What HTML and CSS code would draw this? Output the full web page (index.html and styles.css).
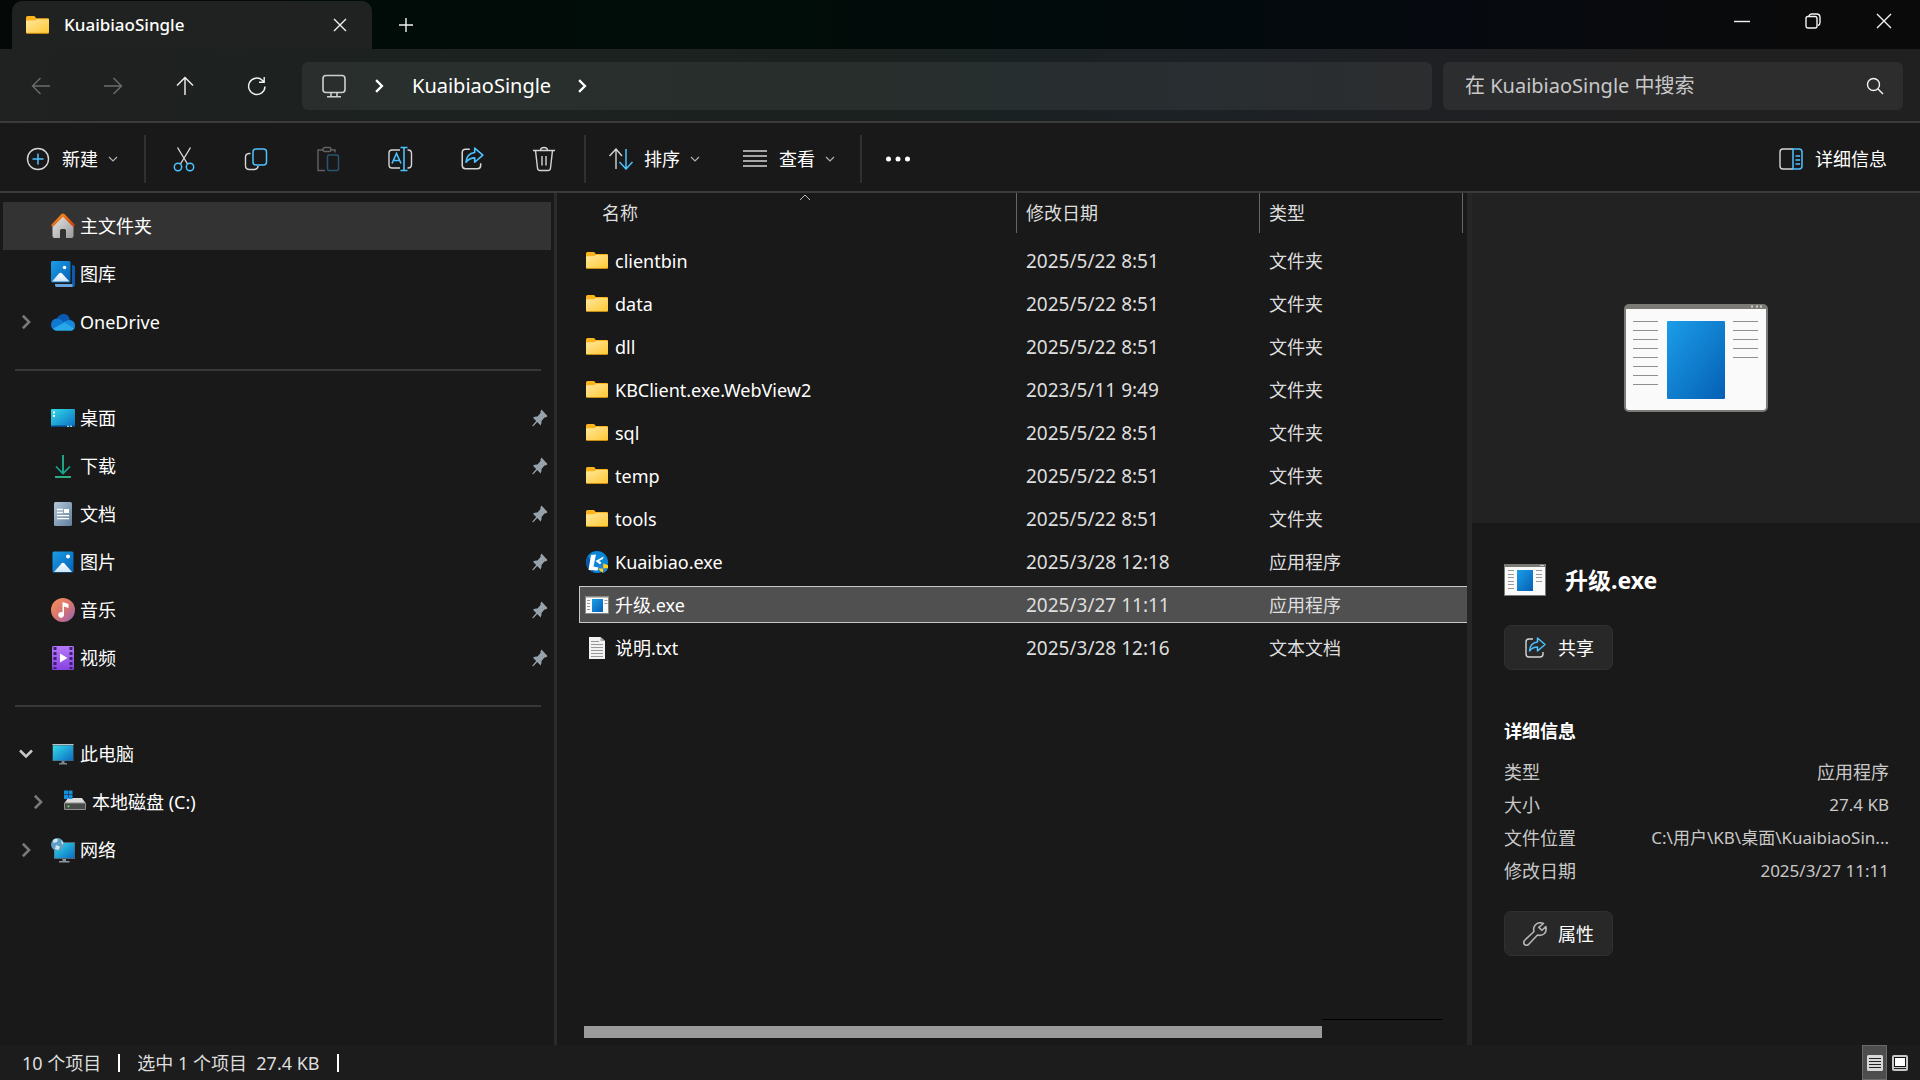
FILE: index.html
```html
<!DOCTYPE html>
<html lang="zh-CN">
<head>
<meta charset="utf-8">
<title>KuaibiaoSingle</title>
<link rel="stylesheet" href="styles.css">
</head>
<body>
<svg class="defs" aria-hidden="true">
  <defs>
    <linearGradient id="gFolder" x1="0" y1="0" x2="1" y2="1"><stop offset="0" stop-color="#ffe7a0"/><stop offset="1" stop-color="#fec831"/></linearGradient>
    <linearGradient id="gBlue" x1="0" y1="0" x2="1" y2="1"><stop offset="0" stop-color="#1b9de8"/><stop offset="1" stop-color="#0560b4"/></linearGradient>
    <linearGradient id="gCyan" x1="0" y1="0" x2="1" y2="1"><stop offset="0" stop-color="#34dbe8"/><stop offset="1" stop-color="#0a6cc4"/></linearGradient>
    <linearGradient id="gWhite" x1="0" y1="0" x2="0" y2="1"><stop offset="0" stop-color="#ffffff"/><stop offset="1" stop-color="#cfe4fa"/></linearGradient>
    <linearGradient id="gHouse" x1="0" y1="0" x2="1" y2="1"><stop offset="0" stop-color="#e8e8e8"/><stop offset="1" stop-color="#9a9a9a"/></linearGradient>
    <linearGradient id="gRoof" x1="0" y1="0" x2="1" y2="1"><stop offset="0" stop-color="#f99d1c"/><stop offset="1" stop-color="#d0380a"/></linearGradient>
    <linearGradient id="gDown" x1="0" y1="0" x2="0" y2="1"><stop offset="0" stop-color="#27b07a"/><stop offset="1" stop-color="#12a595"/></linearGradient>
    <linearGradient id="gDoc" x1="0" y1="0" x2="1" y2="1"><stop offset="0" stop-color="#b4c6d8"/><stop offset="1" stop-color="#5f7f9c"/></linearGradient>
    <linearGradient id="gMusic" x1="0" y1="0" x2="1" y2="1"><stop offset="0" stop-color="#f79257"/><stop offset=".5" stop-color="#d9756f"/><stop offset="1" stop-color="#9560b8"/></linearGradient>
    <linearGradient id="gVideo" x1="0" y1="0" x2="0" y2="1"><stop offset="0" stop-color="#b678fa"/><stop offset="1" stop-color="#8842e0"/></linearGradient>
    <symbol id="folder" viewBox="0 0 22 17"><path d="M0 1.500Q0 0 1.500 0H7.500Q8.500 0 9 1L9.700 2H21Q22 2 22 3V12H0Z" fill="#fbb41b"/><path d="M0 5Q0 4.200 1 4.200H7.500Q8.500 4.200 9.200 3.600L10 3H21Q22 3 22 4V15.500Q22 16.500 21 16.500H1Q0 16.500 0 15.500Z" fill="url(#gFolder)"/><path d="M0.500 16.500H21.500" stroke="#c88c10" stroke-width="1"/></symbol>
    <symbol id="exe" viewBox="0 0 144 108"><rect width="144" height="108" rx="5" fill="#7c7a74"/><path d="M2 5H142V103Q142 106 139 106H5Q2 106 2 103Z" fill="#fafafa"/><path d="M127 1.500h2v2h-2zM132 1.500h2v2h-2zM136 1.500h2v2h-2z" fill="#ccc"/><rect x="43" y="17" width="58" height="78" rx="1" fill="url(#gBlue)"/><path d="M9 17.500h25M9 26.500h25M9 35.500h25M9 44.500h25M9 53.500h25M9 62.500h25M9 71.500h25M9 80.500h25M109 17.500h25M109 26.500h25M109 35.500h25M109 44.500h25M109 53.500h25" stroke="#8f8f8f"/></symbol>
    <symbol id="exe-s" viewBox="0 0 42 32"><path d="M0 0H42V32H0Z" fill="#7c7a74"/><path d="M1 3H41V31H1Z" fill="#fafafa"/><path d="M36 1.500h4" stroke="#ccc"/><rect x="13" y="6" width="16" height="21" fill="url(#gBlue)"/><path d="M4 6.500h6M4 10.500h6M4 13.500h6M4 17.500h6M4 20.500h6M4 24.500h6M32 6.500h6M32 10.500h6M32 13.500h6M32 17.500h6" stroke="#999"/></symbol>
    <symbol id="exe-xs" viewBox="0 0 24 18"><path d="M0 0H24V18H0Z" fill="#8a8882"/><path d="M1 1.500H23V17H1Z" fill="#fafafa"/><rect x="7" y="3" width="11" height="13" fill="url(#gBlue)"/><path d="M2 4.500h3M2 7.500h3M2 10.500h3M2 13.500h3M19.500 4.500h3M19.500 7.500h3" stroke="#999"/></symbol>
    <symbol id="share" viewBox="0 0 24 24"><path d="M10 3H6Q3 3 3 6V18Q3 21 6 21H17Q20 21 20 18V16" fill="none" stroke="#d5d5d5" stroke-width="1.400"/><path d="M14.500 2L22 8.500L14.500 15V11Q9.500 11 6.500 15Q7 7 14.500 6Z" fill="none" stroke="#4cc2ff" stroke-width="1.500" stroke-linejoin="round"/></symbol>
    <symbol id="pin" viewBox="0 0 16 18"><path d="M9.500 0.500L15.500 7Q14.500 8.500 12.500 8.500L9.500 12Q10 14.500 8.500 16.500L5.300 13L1 17.500L0.200 16.800L4.200 12L1 8.700Q3 7.200 5.500 7.500L8.500 4Q8.200 2 9.500 .5Z" fill="#97a2aa"/></symbol>
    <symbol id="caret" viewBox="0 0 10 6"><path d="M1 1L5 5L9 1" fill="none" stroke="#b0b0b0" stroke-width="1.200"/></symbol>
    <symbol id="gt" viewBox="0 0 8 12"><path d="M1.500 1L6.500 6L1.500 11" fill="none" stroke="currentColor" stroke-width="2"/></symbol>
  </defs>
</svg>

<div class="window">
  <header class="titlebar">
    <div class="tab">
      <svg class="tab-folder"><use href="#folder"/></svg>
      <span class="tab-title">KuaibiaoSingle</span>
      <button class="plain tab-close" aria-label="关闭标签页"><svg width="14" height="14" viewBox="0 0 14 14"><path d="M1 1L13 13M13 1L1 13" class="ln"/></svg></button>
    </div>
    <button class="plain new-tab" aria-label="新标签页"><svg width="16" height="16" viewBox="0 0 16 16"><path d="M8 1V15M1 8H15" class="ln"/></svg></button>
    <div class="caption">
      <button class="plain" aria-label="最小化"><svg width="16" height="16" viewBox="0 0 16 16"><path d="M0 8.500H16" class="ln"/></svg></button>
      <button class="plain" aria-label="还原"><svg width="16" height="16" viewBox="0 0 16 16"><rect x="1" y="3.500" width="11" height="11.500" rx="2" class="ln"/><path d="M4 3.500V3Q4.500 1 6.500 1H11.500Q15 1 15 4.500V9.500Q15 12 13 12.500" class="ln"/></svg></button>
      <button class="plain" aria-label="关闭"><svg width="16" height="16" viewBox="0 0 16 16"><path d="M1 1L15 15M15 1L1 15" class="ln"/></svg></button>
    </div>
  </header>

  <nav class="navbar">
    <div class="nav-buttons">
      <button class="plain" disabled aria-label="后退"><svg width="20" height="18" viewBox="0 0 20 18"><path d="M19 9H1.500M9.500 1L1.500 9L9.500 17" class="ln dim"/></svg></button>
      <button class="plain" disabled aria-label="前进"><svg width="20" height="18" viewBox="0 0 20 18"><path d="M1 9H18.500M10.500 1L18.500 9L10.500 17" class="ln dim"/></svg></button>
      <button class="plain" aria-label="向上"><svg width="18" height="20" viewBox="0 0 18 20"><path d="M9 19V1.500M1 9.500L9 1.500L17 9.500" class="ln"/></svg></button>
      <button class="plain" aria-label="刷新"><svg width="20" height="20" viewBox="0 0 20 20"><path d="M18 10.500A8.200 8.200 0 1 1 15.300 4.200L17 6M17.200 1V6.300H12" class="ln"/></svg></button>
    </div>
    <div class="address">
      <svg class="pc" viewBox="0 0 24 24"><path d="M4 1.500H20Q23 1.500 23 4.500V15.500Q23 18.500 20 18.500H4Q1 18.500 1 15.500V4.500Q1 1.500 4 1.500ZM9 19V22.500M15 19V22.500M5 22.800H19" fill="none" stroke="#d0d0d0" stroke-width="1.600"/></svg>
      <svg class="crumb-gt"><use href="#gt"/></svg>
      <a href="#" class="crumb">KuaibiaoSingle</a>
      <svg class="crumb-gt"><use href="#gt"/></svg>
    </div>
    <label class="search">
      <input type="text" placeholder="在 KuaibiaoSingle 中搜索" aria-label="搜索">
      <svg width="18" height="18" viewBox="0 0 18 18"><circle cx="7.500" cy="7.500" r="6" class="ln"/><path d="M12 12L17 17" class="ln"/></svg>
    </label>
  </nav>

  <div class="toolbar">
    <button class="plain tool new"><svg class="wide" width="24" height="24" viewBox="0 0 24 24"><circle cx="12" cy="12" r="10.500" fill="none" stroke="#d5d5d5" stroke-width="1.400"/><path d="M12 6.500V17.500M6.500 12H17.500" stroke="#4cc2ff" stroke-width="1.500"/></svg>新建<svg class="caret"><use href="#caret"/></svg></button>
    <span class="divider"></span>
    <div class="tool-icons">
      <button class="plain" aria-label="剪切"><svg width="24" height="26" viewBox="0 0 24 26"><path d="M5.500 1.500L15.500 18M18.500 1.500L8.500 18" stroke="#d5d5d5" stroke-width="1.400"/><g fill="none" stroke="#4cc2ff" stroke-width="1.500"><circle cx="6" cy="21" r="3.700"/><circle cx="18" cy="21" r="3.700"/></g></svg></button>
      <button class="plain" aria-label="复制"><svg width="24" height="24" viewBox="0 0 24 24"><path d="M6.500 6.500H5Q1.500 7 1.500 10V18.500Q1.500 22.500 5.500 22.500H10Q13.500 22.500 14.200 19" fill="none" stroke="#d5d5d5" stroke-width="1.400"/><rect x="9" y="2" width="13.500" height="16" rx="3" fill="none" stroke="#4cc2ff" stroke-width="1.500"/></svg></button>
      <button class="plain" disabled aria-label="粘贴"><svg width="24" height="26" viewBox="0 0 24 26"><path d="M7 4H2V24.500H9M14 4H19V6.500" fill="none" stroke="#626262" stroke-width="1.400"/><rect x="7" y="1.500" width="8" height="4" rx="2" fill="none" stroke="#626262" stroke-width="1.400"/><rect x="11.500" y="9" width="11" height="15.500" rx="1.500" fill="none" stroke="#2b5470" stroke-width="1.500"/></svg></button>
      <button class="plain" aria-label="重命名"><svg width="26" height="26" viewBox="0 0 26 26"><path d="M13 4H5Q2 4 2 7V18.500Q2 22 5 22H13M20.500 4H21Q24.500 4 24.500 7.500V18.500Q24.500 22 21 22H20.500" fill="none" stroke="#d5d5d5" stroke-width="1.400"/><path d="M5 17.500L9.500 7.500L14 17.500M6.500 14.500H12.500M13.500 1.500H20.500M13.500 24.500H20.500M17 1.500V24.500" fill="none" stroke="#4cc2ff" stroke-width="1.600"/></svg></button>
      <button class="plain" aria-label="共享"><svg width="26" height="26"><use href="#share"/></svg></button>
      <button class="plain" aria-label="删除"><svg width="24" height="26" viewBox="0 0 24 26"><path d="M1 4.500H23M8.500 4.500Q8.500 1.500 12 1.500Q15.500 1.500 15.500 4.500M3.500 4.500L5.500 22Q5.700 24.500 8 24.500H16Q18.300 24.500 18.500 22L20.500 4.500M10 10V19.500M14 10V19.500" fill="none" stroke="#d5d5d5" stroke-width="1.400"/></svg></button>
    </div>
    <span class="divider"></span>
    <button class="plain tool sort"><svg width="26" height="22" viewBox="0 0 26 22"><path d="M8 21V1M1.500 8L8 1L14 8" fill="none" stroke="#d5d5d5" stroke-width="1.400"/><path d="M18 1V21M11.500 14L18 21L24.500 14" fill="none" stroke="#4cc2ff" stroke-width="1.500"/></svg>排序<svg class="caret"><use href="#caret"/></svg></button>
    <button class="plain tool view"><svg class="wide" width="24" height="18" viewBox="0 0 24 18"><path d="M0 1H24M0 6H24M0 11H24M0 16H24" stroke="#d5d5d5" stroke-width="1.400"/></svg>查看<svg class="caret"><use href="#caret"/></svg></button>
    <span class="divider"></span>
    <button class="plain more" aria-label="更多"><svg width="26" height="6" viewBox="0 0 26 6"><circle cx="3.500" cy="3" r="2.500" fill="#fff"/><circle cx="13" cy="3" r="2.500" fill="#fff"/><circle cx="22.500" cy="3" r="2.500" fill="#fff"/></svg></button>
    <button class="plain tool details-btn"><svg class="wide" width="24" height="22" viewBox="0 0 24 22"><path d="M14 1H4Q1 1 1 4V18Q1 21 4 21H14" fill="none" stroke="#d5d5d5" stroke-width="1.400"/><path d="M14 1H20Q23 1 23 4V18Q23 21 20 21H14ZM16.500 8H21M16.500 12H21M16.500 16H21" fill="none" stroke="#4cc2ff" stroke-width="1.500"/></svg>详细信息</button>
  </div>

  <main class="main">
    <aside class="sidebar">
      <ul class="tree">
        <li><a href="#" class="node active"><span class="exp"></span><svg class="ico" viewBox="0 0 24 26"><path d="M1.500 11L12 2L22.500 11V23Q22.500 25 20.500 25H15V17.500Q15 16 13.500 16H10.500Q9 16 9 17.500V25H3.500Q1.500 25 1.500 23Z" fill="url(#gHouse)"/><path d="M12 0.500Q13 .5 14 1.500L23.500 11.500Q24 12.500 23.300 13.300Q22.300 14 21.500 13.300L12 3.800L2.500 13.300Q1.500 14 .6 13.300Q0 12.300 .6 11.500L10 1.500Q11 .5 12 .5Z" fill="url(#gRoof)"/></svg>主文件夹</a></li>
        <li><a href="#" class="node"><span class="exp"></span><svg class="ico" viewBox="0 0 24 26"><path d="M21 4Q24 4 24 6V24Q24 26 22 26H6Q4 26 4 24V23H21Z" fill="#0b5cb0"/><path d="M4 23H21.500V26H6Q4 26 4 24Z" fill="#6ba5e0"/><rect width="19.500" height="21.500" rx="1.500" fill="url(#gBlue)"/><path d="M1 20.500L8 12.500Q9.500 11 11 12.500L18.500 20.500Z" fill="url(#gWhite)"/><circle cx="13.500" cy="6.500" r="1.800" fill="#fff"/></svg>图库</a></li>
        <li><a href="#" class="node"><span class="exp"><svg class="gt"><use href="#gt"/></svg></span><svg class="ico" viewBox="0 0 24 26"><path d="M5 11.500Q7.500 4.500 13 5Q18 5.500 19 11L14 16Z" fill="#0a58b0"/><path d="M6 9.500Q9 9.500 14 14L6 21.500Q0 21 0 15.500Q0.500 10 6 9.500Z" fill="#0f78d0"/><path d="M13 13Q15.500 11 18.500 11Q24 11.500 24 16.500Q24 21.500 19 21.500L11 17Z" fill="#1689dd"/><path d="M2 19.500L13.500 13.500L23.300 19.500Q22 21.700 19 21.700H6Q3 21.700 2 19.500Z" fill="#28a8ea"/></svg>OneDrive</a></li>
      </ul>
      <hr>
      <ul class="tree">
        <li><a href="#" class="node"><span class="exp"></span><svg class="ico" viewBox="0 0 24 26"><rect y="4" width="24" height="18" rx="1" fill="url(#gCyan)"/><path d="M0 20.500H24V21Q24 22 23 22H1Q0 22 0 21Z" fill="#07488a"/><path d="M2 6.500h2v2h-2zM2 10h2v2h-2z" fill="#fff"/><path d="M16 20.500h2v1.500h-2zM19 20.500h2v1.500h-2z" fill="#9cc"/></svg>桌面<svg class="pin"><use href="#pin"/></svg></a></li>
        <li><a href="#" class="node"><span class="exp"></span><svg class="ico" viewBox="0 0 24 26"><path d="M12 2V20M5 13.500L12 20.500L19 13.500" fill="none" stroke="url(#gDown)" stroke-width="1.600"/><path d="M12 2H12.800V20H11.200V2Z" fill="#1caa86"/><path d="M4 24H20" stroke="#2fc08f" stroke-width="1.800"/></svg>下载<svg class="pin"><use href="#pin"/></svg></a></li>
        <li><a href="#" class="node"><span class="exp"></span><svg class="ico" viewBox="0 0 24 26"><rect x="3" y="1" width="18" height="24" rx="1.500" fill="url(#gDoc)"/><path d="M6 8.500h6M6 11.500h6M6 14.700h12M6 17.700h12" stroke="#fff" stroke-width="1.300"/><path d="M13 8h5v4h-5z" fill="#fff"/></svg>文档<svg class="pin"><use href="#pin"/></svg></a></li>
        <li><a href="#" class="node"><span class="exp"></span><svg class="ico" viewBox="0 0 24 26"><rect x="1.500" y="2.500" width="21" height="21" rx="1.500" fill="url(#gBlue)"/><path d="M3 23L10.500 14.500Q12 13 13.500 14.500L21 23Z" fill="url(#gWhite)"/><circle cx="17" cy="7.500" r="2" fill="#fff"/></svg>图片<svg class="pin"><use href="#pin"/></svg></a></li>
        <li><a href="#" class="node"><span class="exp"></span><svg class="ico" viewBox="0 0 24 26"><circle cx="12" cy="13" r="12" fill="url(#gMusic)"/><path d="M11.500 5L17.500 7V11L13 9.500V17.500A2.900 2.900 0 1 1 11.500 15.300Z" fill="#fff"/></svg>音乐<svg class="pin"><use href="#pin"/></svg></a></li>
        <li><a href="#" class="node"><span class="exp"></span><svg class="ico" viewBox="0 0 24 26"><rect x="1" y="1" width="22" height="24" rx="1.500" fill="url(#gVideo)"/><path d="M4 2V24M20 2V24" stroke="#3b2170" stroke-width="3" stroke-dasharray="3 2"/><path d="M9 8.500L16.500 13L9 17.500Z" fill="#fff"/></svg>视频<svg class="pin"><use href="#pin"/></svg></a></li>
      </ul>
      <hr>
      <ul class="tree">
        <li><a href="#" class="node"><span class="exp"><svg class="down" viewBox="0 0 14 10"><path d="M1 1.500L7 7.500L13 1.500" fill="none" stroke="#c8c8c8" stroke-width="2.500"/></svg></span><svg class="ico" viewBox="0 0 24 26"><path d="M8 22H16V23.500H8ZM10.500 19H13.500V22H10.500Z" fill="#7d8790"/><rect x="1.500" y="3" width="21" height="17" fill="#5a6570"/><rect x="2" y="4.500" width="20" height="15" fill="url(#gCyan)"/><path d="M1.500 3.500h21" stroke="#b8c4cc"/></svg>此电脑</a>
          <ul class="tree sub">
            <li><a href="#" class="node"><span class="exp"><svg class="gt"><use href="#gt"/></svg></span><svg class="ico" viewBox="0 0 24 26"><path d="M5 9H19L22.500 14H1.500Z" fill="#dcdcdc"/><rect x="1" y="13.500" width="22" height="7.500" rx="1" fill="#8f8f8f"/><rect x="2" y="14.500" width="20" height="5.500" fill="#4a4a4a"/><path d="M1 1.500h4v4h-4zM5.500 1.500h4v4h-4zM1 6h4v4h-4zM5.500 6h4v4h-4z" fill="#1690dc"/><circle cx="5.500" cy="17.300" r="1.100" fill="#4df04d"/></svg>本地磁盘 (C:)</a></li>
          </ul>
        </li>
        <li><a href="#" class="node"><span class="exp"><svg class="gt"><use href="#gt"/></svg></span><svg class="ico" viewBox="0 0 24 26"><path d="M8 24H18.500V25.500H8ZM11.500 21H15V24H11.500Z" fill="#8a949c"/><rect x="3" y="5" width="21" height="17" fill="#52626e"/><rect x="3.500" y="6" width="20" height="15" fill="url(#gCyan)"/><circle cx="6.500" cy="7.500" r="6.500" fill="#5d9fc4"/><path d="M2 3Q5 1 7 2.500L6 5L2.500 6ZM5 8L9 9.500L7.500 13L4 12ZM10 3L12.500 6L11 8Z" fill="#cfe7f0"/></svg>网络</a></li>
      </ul>
    </aside>

    <section class="files">
      <div class="table-wrap">
      <table>
        <colgroup><col class="c-name"><col class="c-date"><col></colgroup>
        <thead><tr><th class="h-name">名称<svg class="sort-up" viewBox="0 0 12 7"><path d="M1 6L6 1L11 6" fill="none" stroke="#bbb"/></svg></th><th>修改日期</th><th class="h-last">类型</th></tr></thead>
        <tbody>
          <tr><td><span class="name"><svg class="fi dir"><use href="#folder"/></svg>clientbin</span></td><td class="lat">2025/5/22 8:51</td><td>文件夹</td></tr>
          <tr><td><span class="name"><svg class="fi dir"><use href="#folder"/></svg>data</span></td><td class="lat">2025/5/22 8:51</td><td>文件夹</td></tr>
          <tr><td><span class="name"><svg class="fi dir"><use href="#folder"/></svg>dll</span></td><td class="lat">2025/5/22 8:51</td><td>文件夹</td></tr>
          <tr><td><span class="name"><svg class="fi dir"><use href="#folder"/></svg>KBClient.exe.WebView2</span></td><td class="lat">2023/5/11 9:49</td><td>文件夹</td></tr>
          <tr><td><span class="name"><svg class="fi dir"><use href="#folder"/></svg>sql</span></td><td class="lat">2025/5/22 8:51</td><td>文件夹</td></tr>
          <tr><td><span class="name"><svg class="fi dir"><use href="#folder"/></svg>temp</span></td><td class="lat">2025/5/22 8:51</td><td>文件夹</td></tr>
          <tr><td><span class="name"><svg class="fi dir"><use href="#folder"/></svg>tools</span></td><td class="lat">2025/5/22 8:51</td><td>文件夹</td></tr>
          <tr><td><span class="name"><svg class="fi" viewBox="0 0 22 22"><circle cx="11" cy="11" r="11" fill="#0a86d8"/><path d="M2 5A11 11 0 0 0 8 21.500L6 12Z" fill="#0b55a8"/><path d="M5 4L10 3.500L7.500 15.500L12.500 16.500L11.500 19.500L2.500 19Z" fill="#fff"/><path d="M17.500 5.500L9.500 10L14 13.500L15.500 11.500L13 10L17 8Z" fill="#fff"/><path d="M12.500 14Q15.500 13.500 17.300 12.300V17.500H12.300Z" fill="#2a7fd0"/><path d="M17.300 12.300Q19 13.500 22 14V17.500H17.300Z" fill="#ffd21a"/><path d="M12.300 17.500H17.300V22Q13.500 20.500 12.300 17.500Z" fill="#ffd21a"/><path d="M17.300 17.500H22Q21 20.500 17.300 22Z" fill="#2a7fd0"/></svg>Kuaibiao.exe</span></td><td class="lat">2025/3/28 12:18</td><td>应用程序</td></tr>
          <tr class="selected"><td><span class="name"><svg class="fi exe"><use href="#exe-xs"/></svg>升级.exe</span></td><td class="lat">2025/3/27 11:11</td><td>应用程序</td></tr>
          <tr><td><span class="name"><svg class="fi" viewBox="0 0 22 22"><path d="M3 0H14.500L19 4V22H3Z" fill="#f2f2f2"/><path d="M14.500 0V4H19Z" fill="#a8a8a8"/><path d="M5 4.500H13M5 7.500H17M5 10.500H17M5 13.500H17M5 16.500H17M5 19.500H17" stroke="#999"/></svg>说明.txt</span></td><td class="lat">2025/3/28 12:16</td><td>文本文档</td></tr>
        </tbody>
      </table>
      </div>
      <div class="hscroll"><span class="thumb"></span></div>
    </section>

    <aside class="details">
      <div class="preview"><svg class="big-exe"><use href="#exe"/></svg></div>
      <div class="info">
        <h2><svg class="exe-ico"><use href="#exe-s"/></svg>升级.exe</h2>
        <button class="card-btn"><svg width="24" height="24"><use href="#share"/></svg>共享</button>
        <h3>详细信息</h3>
        <dl>
          <div><dt>类型</dt><dd>应用程序</dd></div>
          <div><dt>大小</dt><dd class="value">27.4 KB</dd></div>
          <div><dt>文件位置</dt><dd class="value">C:\用户\KB\桌面\KuaibiaoSin...</dd></div>
          <div><dt>修改日期</dt><dd class="value">2025/3/27 11:11</dd></div>
        </dl>
        <button class="card-btn"><svg width="24" height="24" viewBox="0 0 24 24"><path d="M20.500 1.500Q15.500-.5 12.300 3Q9.800 6 11 9.500L1.500 18.500Q0 20.500 1.500 22.500Q3.500 24 5.500 22.500L14.500 13Q18.500 14.200 21.500 11.500Q24 8.500 22.800 4.500L19 8.300L15.800 5.300Z" fill="none" stroke="#b5b5b5" stroke-width="1.600" stroke-linejoin="round"/></svg>属性</button>
      </div>
    </aside>
  </main>

  <footer class="status">
    <span class="st">10 个项目</span>
    <span class="bar"></span>
    <span class="st">选中 1 个项目&nbsp; 27.4 KB</span>
    <span class="bar"></span>
    <div class="modes">
      <button class="plain mode on" aria-label="详细信息视图"><svg width="16" height="16" viewBox="0 0 16 16"><rect width="16" height="16" rx="1.500" fill="#d8d8d8"/><path d="M2 3.500H14M2 6.500H14M2 9.500H14M2 12.500H14" stroke="#222"/></svg></button>
      <button class="plain mode" aria-label="大图标视图"><svg width="16" height="16" viewBox="0 0 16 16"><rect width="16" height="16" rx="2" fill="#c8c8c8"/><rect x="2.500" y="2.500" width="11" height="9" fill="#fff" stroke="#111"/><path d="M2 13.500H14" stroke="#222"/></svg></button>
    </div>
  </footer>
</div>
</body>
</html>
```
FILE: styles.css
```css
* { box-sizing: border-box; }
body {
  margin: 0;
  background: #191919;
  color: #fff;
  font: 18px/24px "Noto Sans", "Noto Sans CJK SC", sans-serif;
}
ul, dl, dd, h2, h3 { margin: 0; padding: 0; list-style: none; }
a { color: inherit; text-decoration: none; }
svg { display: block; flex: none; }
.defs { position: absolute; width: 0; height: 0; }
.ln { fill: none; stroke: #f2f2f2; stroke-width: 1.400; }
.ln.dim { stroke: #6a6d6c; }
.plain {
  display: flex;
  align-items: center;
  justify-content: center;
  padding: 0;
  border: 0;
  background: none;
  color: inherit;
  font: inherit;
}

.window { display: flex; flex-direction: column; min-height: 100vh; }

.titlebar {
  display: flex;
  height: 49px;
  padding-left: 12px;
  background: linear-gradient(90deg, #040806 0, #010c08 20%, #010d09 40%, #020a0c 60%, #060a10 75%, #0a0a0a 95%);
}
.tab {
  display: flex;
  align-items: center;
  width: 360px;
  margin-top: 1px;
  padding: 0 10px 0 14px;
  border-radius: 10px 10px 0 0;
  background: #1f2220;
}
.tab-folder { width: 23px; height: 18px; margin-right: 15px; }
.tab-title { flex: 1; font-size: 17px; font-weight: 500; }
.tab-close { width: 44px; height: 32px; }
.new-tab { width: 68px; }
.caption { display: flex; height: 42px; margin-left: auto; padding-right: 1px; }
.caption .plain { width: 71px; }

.navbar {
  display: flex;
  align-items: center;
  height: 74px;
  padding: 2px 17px 0 5px;
  border-bottom: 2px solid #3a3a3a;
  background: linear-gradient(90deg, #202121 0, #1b2220 25%, #1a211f 45%, #1b2125 62%, #1f2023 75%, #202020 90%);
}
.nav-buttons { display: flex; width: 297px; }
.nav-buttons .plain { width: 72px; height: 48px; }
.address {
  display: flex;
  align-items: center;
  flex: 1;
  height: 48px;
  margin-right: 11px;
  padding-left: 20px;
  border-radius: 6px;
  background: rgba(255, 255, 255, .06);
  font-size: 20px;
}
.pc { width: 24px; height: 24px; margin-right: 28px; }
.crumb-gt { width: 10px; height: 14px; }
.crumb { margin: 0 26px 0 28px; }
.search {
  display: flex;
  align-items: center;
  width: 460px;
  height: 48px;
  padding: 0 19px 0 22px;
  border-radius: 6px;
  background: rgba(255, 255, 255, .06);
}
.search input {
  flex: 1;
  min-width: 0;
  padding: 0;
  border: 0;
  outline: 0;
  background: none;
  color: #fff;
  font: inherit;
  font-size: 20px;
}
.search input::placeholder { color: #c8c8c8; opacity: 1; }

.toolbar {
  display: flex;
  align-items: center;
  height: 70px;
  padding: 4px 33px 0 26px;
  border-bottom: 2px solid #3a3a3a;
}
.tool { gap: 10px; }
.wide { margin-right: 2px; }
.caret { width: 10px; height: 6px; }
.new { margin-right: 26px; }
.divider { width: 2px; height: 48px; background: #303030; }
.tool-icons { display: flex; margin: 0 4px 0 2px; }
.tool-icons .plain { width: 72px; height: 48px; }
.sort { margin: 0 43px 0 22px; }
.view { margin-right: 25px; }
.more { width: 72px; height: 48px; }
.details-btn { margin-left: auto; }

.main { display: flex; flex: 1; }
.sidebar {
  width: 557px;
  padding: 9px 3px 0 3px;
  border-right: 3px solid #2b2b2b;
}
.node { display: flex; align-items: center; height: 48px; padding: 0 3px 0 11px; }
.node.active { background: #333; }
.sub .node { padding-left: 23px; }
.exp { display: flex; justify-content: center; width: 24px; margin-right: 13px; color: #7a7a7a; }
.gt { width: 10px; height: 16px; }
.down { width: 14px; height: 10px; }
.ico { width: 24px; height: 26px; margin-right: 5px; }
.pin { width: 16px; height: 18px; margin-left: auto; }
.sidebar hr { height: 2px; margin: 23px 10px 23px 12px; border: 0; background: #383838; }

.files { display: flex; flex: 1; flex-direction: column; min-width: 0; padding-left: 22px; }
.table-wrap { flex: 1; }
table { width: 100%; border-collapse: separate; border-spacing: 0; table-layout: fixed; }
.c-name { width: 438px; }
.c-date { width: 243px; }
th {
  position: relative;
  height: 40px;
  padding: 0 0 0 9px;
  color: #dedede;
  font-weight: 400;
  text-align: left;
}
th::after {
  content: "";
  position: absolute;
  top: 0;
  right: 0;
  width: 1px;
  height: 100%;
  background: #666;
}
.h-last::after { right: 4px; }
.h-name { padding-left: 23px; }
.sort-up { position: absolute; top: 1px; left: 220px; width: 12px; height: 7px; }
tbody::before { content: ""; display: table-row; height: 6px; }
td { height: 43px; padding: 0 0 0 9px; color: #dedede; }
td:first-child { padding-left: 7px; color: #fff; }
.name { display: flex; align-items: center; gap: 7px; }
.fi { width: 22px; height: 22px; }
.fi.dir { height: 17px; }
.fi.exe { width: 24px; height: 18px; margin: 0 -1px; }
.lat { font-size: 19px; }
.selected {
  background: linear-gradient(#c8c8c8, #c8c8c8) 0 3px / 100% 1px no-repeat,
    linear-gradient(#c8c8c8, #c8c8c8) 0 39px / 100% 1px no-repeat,
    linear-gradient(#c8c8c8, #c8c8c8) 0 3px / 1px 37px no-repeat,
    linear-gradient(#505050, #505050) 0 3px / 100% 37px no-repeat;
}
.hscroll { height: 26px; margin: 0 25px 0 5px; }
.hscroll::before {
  content: "";
  display: block;
  width: 14%;
  height: 1px;
  margin: 0 0 6px 86%;
  background: #000;
}
.thumb { display: block; width: 86%; height: 12px; background: #9b9b9b; }

.details { width: 453px; border-left: 5px solid #262626; }
.preview { display: flex; align-items: center; justify-content: center; height: 330px; background: #222; }
.big-exe { width: 144px; height: 108px; }
.info { padding: 40px 31px 0 32px; }
.info h2 { display: flex; align-items: center; gap: 19px; height: 34px; margin-bottom: 28px; font-size: 23px; font-weight: 700; }
.exe-ico { width: 42px; height: 32px; }
.card-btn {
  display: flex;
  align-items: center;
  gap: 11px;
  height: 45px;
  padding: 0 18px;
  border: 1px solid #303030;
  border-radius: 7px;
  background: #282828;
  color: #fff;
  font: inherit;
}
.info h3 { margin: 49px 0 12px; font-size: 18px; font-weight: 700; }
.info dl { margin-bottom: 24px; color: #c8c8c8; }
.info dl div { display: flex; justify-content: space-between; height: 33px; align-items: center; white-space: nowrap; }
.value { font-size: 17px; }

.status { display: flex; align-items: center; height: 35px; padding-left: 22px; background: #1c1c1c; color: #dedede; }
.bar { width: 2px; height: 18px; margin: 0 17px; background: #fff; }
.modes { display: flex; height: 35px; margin-left: auto; padding-right: 8px; }
.mode { width: 25px; border: 1px solid transparent; }
.mode.on { border-color: #6a6a6a; background: #4d4d4d; }
```
